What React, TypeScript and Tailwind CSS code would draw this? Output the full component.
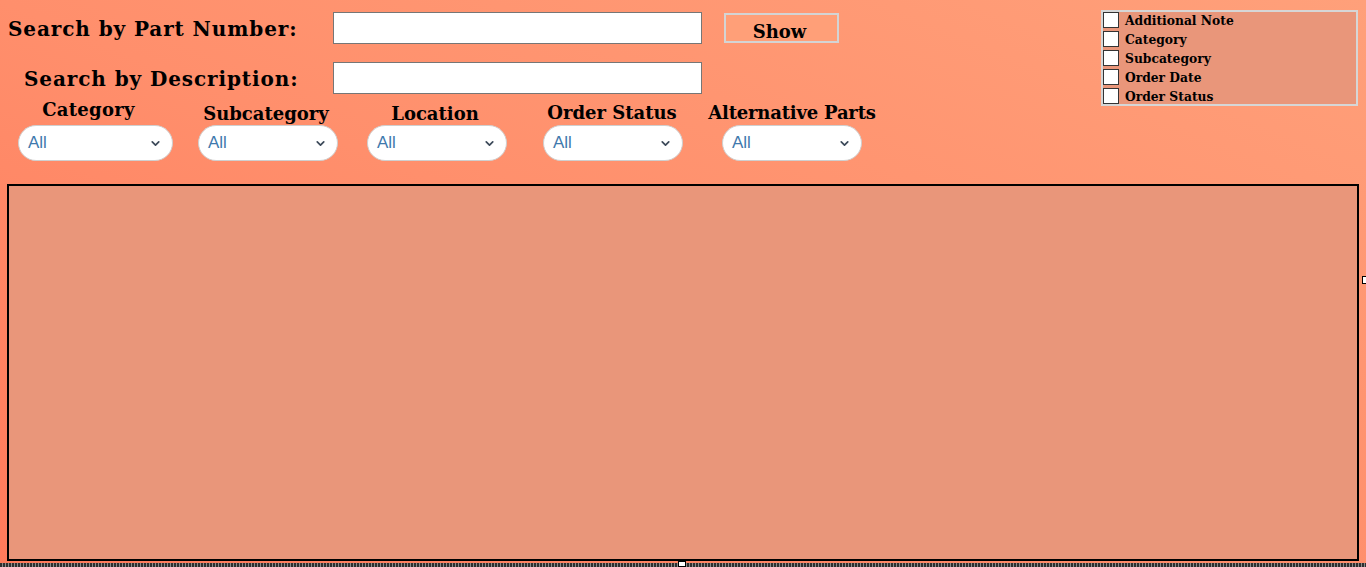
import { ChevronDown } from "lucide-react";

const serif = "font-['DejaVu_Serif',Georgia,serif]";

const filters = [
	{ label: "Category", width: "w-[155px]", ml: "ml-[18px]", labelPad: "mb-[5px] pr-[14px] tracking-[0.3px]" },
	{ label: "Subcategory", width: "w-[140px]", ml: "ml-[25px]", labelPad: "mb-[1px] mt-[6px] pr-[4px]" },
	{ label: "Location", width: "w-[140px]", ml: "ml-[29px]", labelPad: "mb-[1px] mt-[6px] pr-[4px]" },
	{ label: "Order Status", width: "w-[140px]", ml: "ml-[36px]", labelPad: "mb-[2px] mt-[5px] pr-[2px]" },
	{ label: "Alternative Parts", width: "w-[140px]", ml: "ml-[39px]", labelPad: "mb-[2px] mt-[5px] tracking-[-0.2px]" },
];

const columns = ["Additional Note", "Category", "Subcategory", "Order Date", "Order Status"];

function FilterSelect({ label, width, ml, labelPad }: (typeof filters)[number]) {
	return (
		<div className={`flex flex-col items-center ${width} ${ml}`}>
			<div className={`whitespace-nowrap text-[18px] leading-[20px] font-bold text-black ${serif} ${labelPad}`}>
				{label}
			</div>
			<div className="flex h-[36px] w-full items-center justify-between rounded-full border border-[#cfcfcf] bg-white pl-[9px] pr-[10px]">
				<span className="font-['Liberation_Sans',Arial,sans-serif] text-[17px] text-[#3f79ad]">All</span>
				<ChevronDown size={13} strokeWidth={3.2} className="text-[#3d4a5a]" />
			</div>
		</div>
	);
}

export default function App() {
	return (
		<div className="relative h-[567px] w-full overflow-hidden bg-[linear-gradient(to_top_right,#ff7a5b,#ff8f6c_50%,#ffa07a)]">
			<div className="flex h-[184px] justify-between">
				<div className="flex flex-col">
					<div className="mt-[12px] flex items-center">
						<div className={`w-[333px] pl-[8px] pt-[1px] text-[20px] font-bold tracking-[0.9px] text-black ${serif}`}>
							Search by Part Number:
						</div>
						<div className="h-[32px] w-[369px] border border-[#767676] bg-white" />
						<button
							type="button"
							className={`ml-[22px] h-[30px] w-[115px] border-2 border-[#d4d4d4] bg-[#ff9f78] pr-[4px] pt-[3px] text-[18px] font-bold text-black ${serif}`}
						>
							Show
						</button>
					</div>
					<div className="mt-[18px] flex items-center">
						<div className={`w-[333px] pl-[24px] pt-[1px] text-[20px] font-bold tracking-[0.9px] text-black ${serif}`}>
							Search by Description:
						</div>
						<div className="h-[32px] w-[369px] border border-[#767676] bg-white" />
					</div>
					<div className="mt-[4px] flex items-end">
						{filters.map((f) => (
							<FilterSelect key={f.label} {...f} />
						))}
					</div>
				</div>
				<div className="mr-[8px] mt-[10px] flex h-[96px] w-[257px] flex-col border-2 border-[#d6d6d6] bg-[#e9967a]">
					{columns.map((c) => (
						<label key={c} className="flex h-[19px] shrink-0 items-start gap-[6px]">
							<span className="h-[16px] w-[16px] shrink-0 border border-[#333] bg-white" />
							<span className={`text-[12.3px] leading-[18px] font-bold text-black ${serif}`}>{c}</span>
						</label>
					))}
				</div>
			</div>
			<div className="ml-[7px] h-[377px] w-[1352px] border-2 border-black bg-[#e9967a]" />
			<div className="absolute bottom-0 left-0 h-[4px] w-full bg-[repeating-linear-gradient(90deg,#2f2f2f_0_2px,#8a8a8a_2px_3px)]" />
			<div className="absolute bottom-0 left-[678px] h-[6px] w-[8px] border border-black bg-white" />
			<div className="absolute right-0 top-[276px] h-[8px] w-[4px] border border-r-0 border-black bg-white" />
		</div>
	);
}
